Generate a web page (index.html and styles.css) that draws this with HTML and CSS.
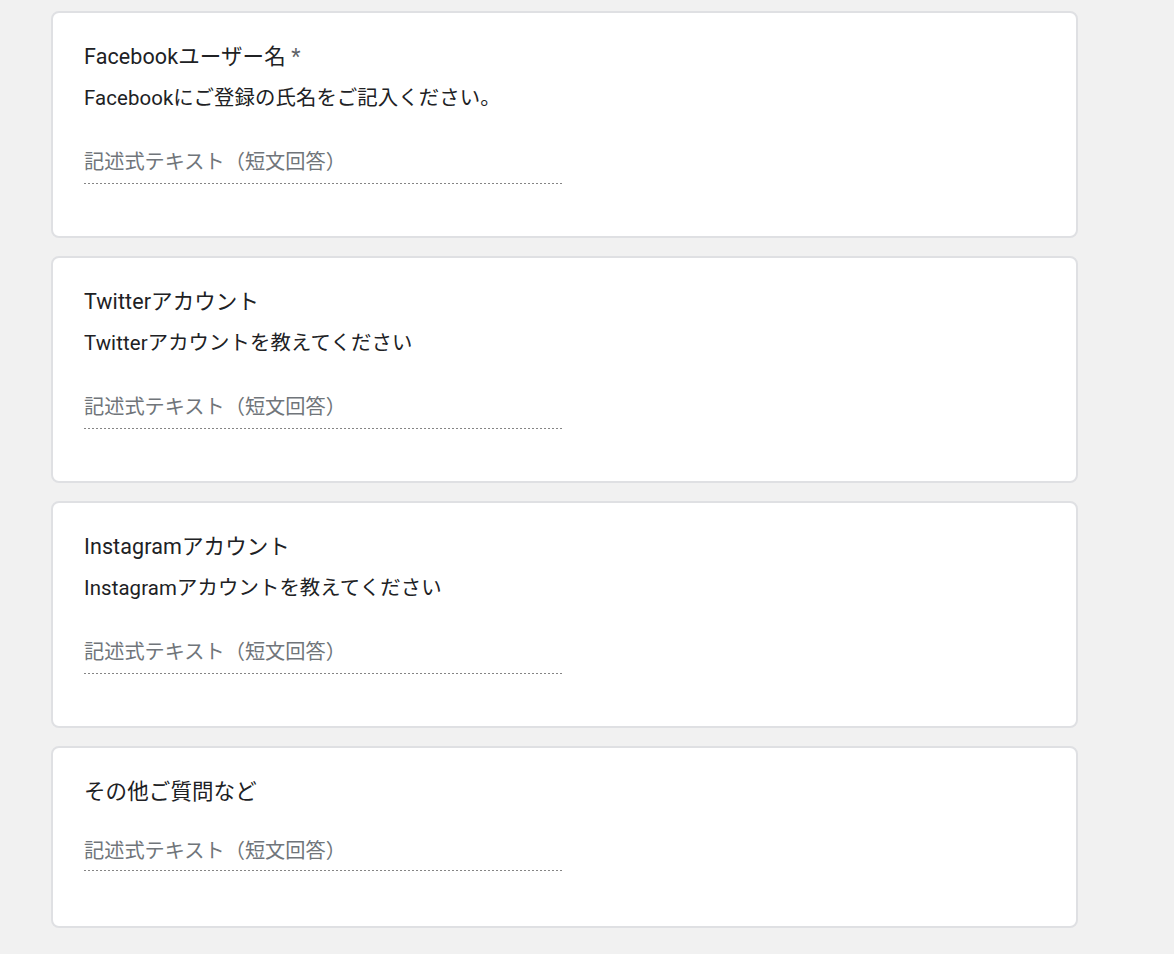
FILE: index.html
```html
<!DOCTYPE html>
<html lang="ja">
<head>
<meta charset="utf-8">
<title>フォーム</title>
<link rel="stylesheet" href="styles.css">
</head>
<body>
<main class="form">
  <section class="card">
    <div class="q-title">Facebookユーザー名<span class="req"> *</span></div>
    <div class="q-desc">Facebookにご登録の氏名をご記入ください。</div>
    <div class="answer"><input class="answer-input" type="text" placeholder="記述式テキスト（短文回答）"></div>
  </section>
  <section class="card">
    <div class="q-title">Twitterアカウント</div>
    <div class="q-desc">Twitterアカウントを教えてください</div>
    <div class="answer"><input class="answer-input" type="text" placeholder="記述式テキスト（短文回答）"></div>
  </section>
  <section class="card">
    <div class="q-title">Instagramアカウント</div>
    <div class="q-desc">Instagramアカウントを教えてください</div>
    <div class="answer"><input class="answer-input" type="text" placeholder="記述式テキスト（短文回答）"></div>
  </section>
  <section class="card card--short">
    <div class="q-title">その他ご質問など</div>
    <div class="answer"><input class="answer-input" type="text" placeholder="記述式テキスト（短文回答）"></div>
  </section>
</main>
</body>
</html>
```

FILE: styles.css
```css
html, body {
  margin: 0;
  padding: 0;
}

body {
  background-color: #f1f1f1;
  font-family: Roboto, "Noto Sans CJK JP", sans-serif;
  color: #202124;
  min-height: 954px;
}

.form {
  display: flex;
  flex-direction: column;
  gap: 18px;
  padding: 11px 0 0 51px;
  width: 1027px;
}

.card {
  background: #ffffff;
  border: 2px solid #dfe0e3;
  border-radius: 8px;
  padding: 30px 31px 52px;
  display: flex;
  flex-direction: column;
}

.card--short {
  padding-bottom: 55px;
}

.q-title {
  font-size: 21.5px;
  line-height: 28px;
  letter-spacing: 0.1px;
  color: #202124;
}

.req {
  color: #5f6368;
}

.q-desc {
  font-size: 20.4px;
  line-height: 28px;
  letter-spacing: 0.1px;
  color: #202124;
  margin-top: 13px;
}

.answer {
  width: 480px;
  margin-top: 36px;
  padding-bottom: 7px;
  border-bottom: 1px solid transparent;
  background-image: linear-gradient(to right, #858585 50%, transparent 50%);
  background-size: 4px 1px;
  background-repeat: repeat-x;
  background-position: left bottom;
  background-origin: border-box;
}

.card--short .answer {
  margin-top: 31px;
  padding-bottom: 5px;
}

.answer-input {
  display: block;
  width: 100%;
  height: 28px;
  margin: 0;
  padding: 0;
  border: 0;
  outline: none;
  background: transparent;
  font-family: Roboto, "Noto Sans CJK JP", sans-serif;
  font-size: 20.2px;
  color: #202124;
}

.answer-input::placeholder {
  color: #70757a;
  opacity: 1;
}
```
